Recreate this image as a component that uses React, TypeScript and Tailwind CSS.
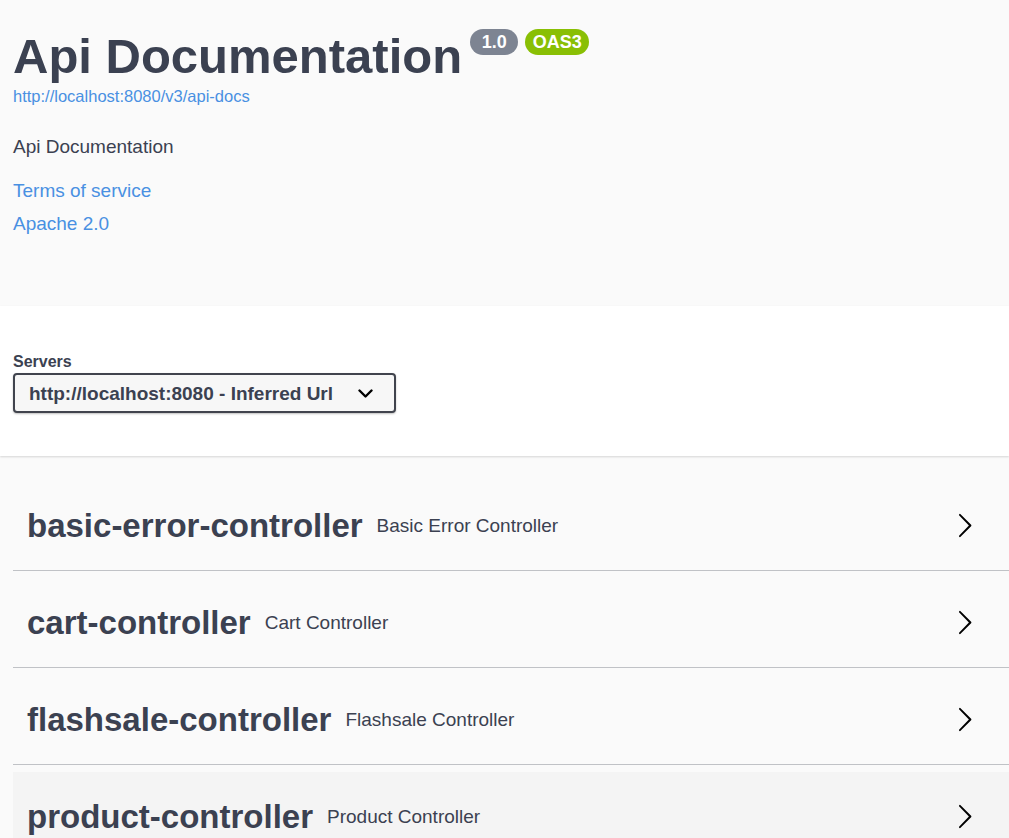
import React from 'react';

const font = { fontFamily: '"Liberation Sans", Arial, sans-serif' };

type Tag = {
  name: string;
  description: string;
  hovered?: boolean;
};

const tags: Tag[] = [
  { name: 'basic-error-controller', description: 'Basic Error Controller' },
  { name: 'cart-controller', description: 'Cart Controller' },
  { name: 'flashsale-controller', description: 'Flashsale Controller' },
  { name: 'product-controller', description: 'Product Controller', hovered: true },
];

const ArrowIcon: React.FC = () => (
  <svg width="27" height="27" viewBox="0 0 20 20" className="shrink-0" aria-hidden="true">
    <path
      fill="#000"
      d="M13.25 10L6.109 2.58a.697.697 0 010-.979.68.68 0 01.969 0l7.83 7.908a.697.697 0 010 .979l-7.83 7.908a.68.68 0 01-.969 0 .697.697 0 010-.979L13.25 10z"
    />
  </svg>
);

const ChevronDown: React.FC = () => (
  <svg width="15" height="9" viewBox="0 0 15 9" className="shrink-0" aria-hidden="true">
    <path d="M1.5 1.5l6 6 6-6" fill="none" stroke="#000" strokeWidth="2.4" strokeLinecap="round" strokeLinejoin="round" />
  </svg>
);

const Info: React.FC = () => (
  <section className="h-[306px] bg-[#fafafa] px-[13px] pt-[28px] text-[#3b4151]">
    <div className="flex items-start">
      <h2 className="text-[49px] leading-[56px] font-bold">Api Documentation</h2>
      <div className="ml-[8px] mt-[1px] flex gap-[7px]">
        <span className="flex h-[26px] w-[48px] items-center justify-center rounded-full bg-[#7d8492] text-[18px] leading-none font-bold text-white">
          1.0
        </span>
        <span className="flex h-[26px] w-[64px] items-center justify-center rounded-full bg-[#89bf04] text-[18px] leading-none font-bold text-white">
          OAS3
        </span>
      </div>
    </div>
    <a className="mt-[2px] block text-[16.5px] leading-[20px] text-[#4990e2]">
      http://localhost:8080/v3/api-docs
    </a>
    <p className="mt-[29px] text-[19px] leading-[24px]">Api Documentation</p>
    <a className="mt-[20px] block text-[19px] leading-[24px] text-[#4990e2]">Terms of service</a>
    <a className="mt-[9px] block text-[19px] leading-[24px] text-[#4990e2]">Apache 2.0</a>
  </section>
);

const Servers: React.FC = () => (
  <section className="h-[150px] bg-white px-[13px] pt-[46px] shadow-[0_1px_2px_0_rgba(0,0,0,0.15)] text-[#3b4151]">
    <div className="text-[16px] leading-[20px] font-bold">Servers</div>
    <div className="mt-[1px] flex h-[40px] w-[383px] items-center justify-between rounded-[4px] border-2 border-[#41444e] bg-[#f7f7f7] pl-[14px] pr-[21px] shadow-[0_1px_2px_0_rgba(0,0,0,0.25)]">
      <span className="text-[19px] leading-none font-bold">http://localhost:8080 - Inferred Url</span>
      <ChevronDown />
    </div>
  </section>
);

const TagRow: React.FC<{ tag: Tag }> = ({ tag }) => (
  <div
    className={`mb-[7px] flex h-[90px] items-center border-b border-[rgba(59,65,81,0.3)] pl-[14px] pr-[31px] text-[#3b4151] ${
      tag.hovered ? 'bg-[#f4f4f4]' : ''
    }`}
  >
    <span className="text-[33px] leading-none font-bold">{tag.name}</span>
    <span className="flex-1 pl-[14px] text-[19px] leading-none">{tag.description}</span>
    <ArrowIcon />
  </div>
);

const App: React.FC = () => {
  return (
    <main className="min-h-screen w-full bg-[#fafafa]" style={font}>
      <Info />
      <Servers />
      <div className="pl-[13px] pt-[25px]">
        {tags.map((tag) => (
          <TagRow key={tag.name} tag={tag} />
        ))}
      </div>
    </main>
  );
};

export default App;
